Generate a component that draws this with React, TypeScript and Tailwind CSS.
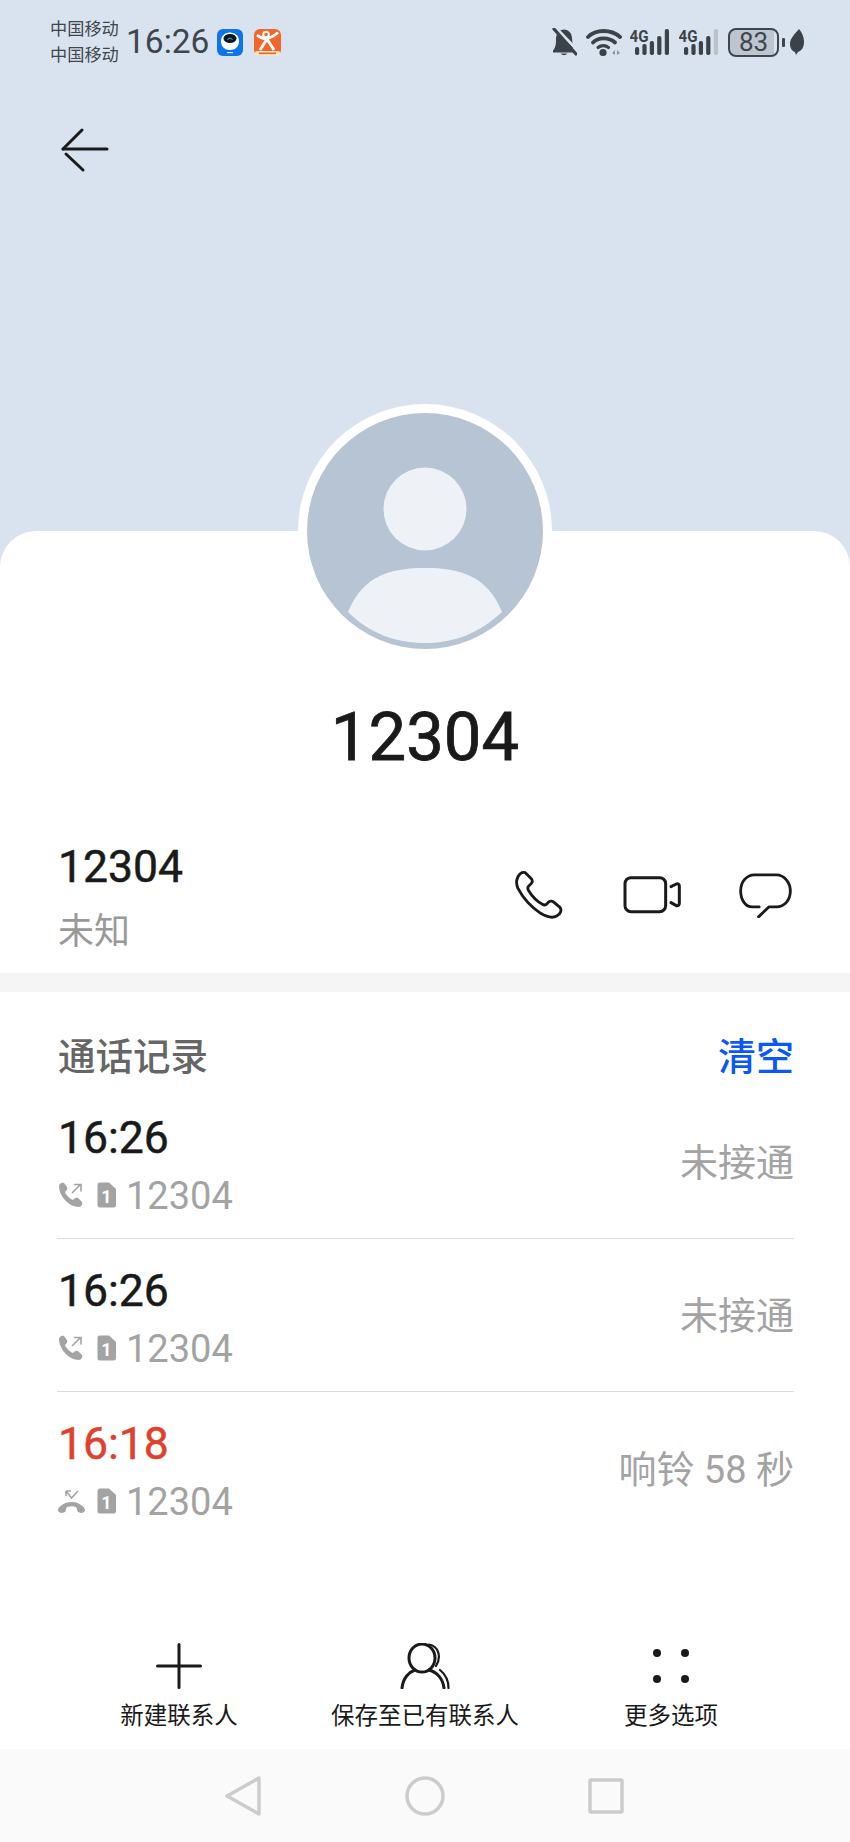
import React from "react";

const calls = [
  { time: "16:26", note: "未接通", missed: false },
  { time: "16:26", note: "未接通", missed: false },
  { time: "16:18", note: "响铃 58 秒", missed: true },
];

// signal bars with the 4G label, the last bar is dimmed on the second sim
const Signal = ({ dim }: { dim?: boolean }) => (
  <svg width="40" height="28" viewBox="0 0 40 28" fill="#3c4249">
    <text x="-0.5" y="13.5" fontSize="16" fontWeight="700" fontFamily="Roboto, sans-serif" textLength="19" lengthAdjust="spacingAndGlyphs">
      4G
    </text>
    <rect x="5" y="19" width="4.2" height="8" rx="1.800" />
    <rect x="12.400" y="16" width="4.200" height="11" rx="1.800" />
    <rect x="19.800" y="13" width="4.200" height="14" rx="1.800" />
    <rect x="27.200" y="8" width="4.200" height="19" rx="1.800" />
    <rect x="34.800" y="1" width="4.200" height="26" rx="1.800" fill={dim ? "#b9c1cb" : "#3c4249"} />
  </svg>
);

const StatusBar = () => (
  <div className="flex h-[84px] items-center pl-[50px] pr-[46px] text-[#3f454d]">
    <div className="w-[76px] text-[17.2px] leading-[26px]">
      <div>中国移动</div>
      <div>中国移动</div>
    </div>
    <span className="w-[91px] text-[33.5px] leading-none">16:26</span>
    {/* app notification icons */}
    <svg width="26" height="27" viewBox="0 0 26 27">
      <rect width="26" height="27" rx="6" fill="#0f74e8" />
      <path d="M4 12 C4 7 8 3.500 13 3.500 C18 3.500 22 7 22 12 C22 18 18 21 13 21 C8 21 4 18 4 12Z" fill="#fff" />
      <ellipse cx="13" cy="9.500" rx="6.500" ry="4.500" fill="#0d1622" />
      <path d="M10.500 10.500 Q13 7.500 15.500 10.500" stroke="#36c6d8" strokeWidth="1" fill="none" />
      <rect x="10" y="23" width="6" height="1.200" fill="#cfe3fb" />
    </svg>
    <svg className="ml-[11px]" width="27" height="27" viewBox="0 0 27 27">
      <rect width="27" height="27" rx="6" fill="#f0662b" />
      <rect x="1" y="22" width="25" height="5" rx="2" fill="#fbe3c8" />
      <circle cx="12" cy="5.500" r="2.800" fill="none" stroke="#fff" strokeWidth="2" />
      <path d="M3 6 Q12 14 24 3.500 M13 10 L6 21 M13 10 L20 21" stroke="#fff" strokeWidth="2.800" fill="none" />
      <rect x="5" y="23.500" width="17" height="1.600" fill="#e8632a" />
    </svg>

    <div className="ml-auto flex items-center">
      <svg width="25" height="28" viewBox="0 0 25 28" fill="#3c4249">
        <path d="M1 22.500 C4 19 4 15 4 11 C4 6 7 1.500 12 1.500 C17 1.500 20 6 20 10 L21 21 L24 24.500 L1 24.500Z" />
        <path d="M8.500 25.500 Q12 29 15.500 25.500Z" />
        <path d="M5 1 L27 24" stroke="#d9e3ef" strokeWidth="3" />
        <path d="M2 1 L24 26" stroke="#3c4249" strokeWidth="3.200" strokeLinecap="round" />
      </svg>
      <svg className="ml-[9px]" width="36" height="28" viewBox="0 0 36 28" fill="none" stroke="#3c4249" strokeLinecap="round">
        <path d="M2 9 C10 1 25 1 34 9" strokeWidth="3.800" />
        <path d="M7 14.500 C12 9 23 9 29 14.500" strokeWidth="3.800" />
        <path d="M12 19.500 C15 17 19.500 17 22.500 19.500" strokeWidth="3.200" />
        <circle cx="17" cy="24.500" r="3.600" fill="#3c4249" stroke="none" />
        <path d="M26 25 L29 22 L29 27Z M31 22 L34 25 L31 27Z" fill="#8d949d" stroke="none" />
      </svg>
      <div className="ml-[8px]">
        <Signal />
      </div>
      <div className="ml-[9px]">
        <Signal dim />
      </div>
      <div className="ml-[9px] flex h-[29px] w-[51px] items-center justify-center rounded-[8px] border-[2.5px] border-[#3f4650] bg-[linear-gradient(90deg,#bcc5d0_93%,transparent_93%)] text-[26px] leading-none">
        83
      </div>
      <div className="ml-[3px] h-[9px] w-[3px] rounded-[1px] bg-[#3f4650]" />
      <svg className="ml-[5px]" width="14" height="26" viewBox="0 0 14 26" fill="#3c4249">
        <path d="M9 0 C13 5 14 9 14 13 C14 19 11 22 8 23 L6 26 L5 23 C2 22 0 19 0 15 C0 9 5 5 9 0Z" />
      </svg>
    </div>
  </div>
);

const Avatar = () => (
  <div className="mx-auto -mt-[127px] h-[254px] w-[254px] shrink-0 rounded-full bg-white p-[9px]">
    <svg width="236" height="236" viewBox="0 0 236 236">
      <circle cx="118" cy="118" r="118" fill="#b6c4d3" />
      <circle cx="118" cy="96" r="41.500" fill="#eef2f7" />
      <path d="M41 199 C56 162 84 155 118 155 C152 155 180 162 195 199 C172 220 148 230 118 230 C88 230 62 220 41 199Z" fill="#eef2f7" />
    </svg>
  </div>
);

// drawn in 3x coordinates taken off the reference
const ContactActions = () => (
  <div className="mt-[32px] flex items-center">
    <svg width="50" height="50" viewBox="100 90 150 150" fill="none" stroke="#1a1a1a" strokeWidth="8.500" strokeLinejoin="round">
      <path d="M108 122 C112 100 125 95 134 98 L152 116 C158 124 154 130 146 136 C140 140 140 146 145 154 C155 170 170 185 185 193 C192 197 196 195 200 190 C206 182 214 182 220 187 L238 202 C244 210 240 222 228 228 C218 234 200 232 180 220 C150 200 125 170 112 145 C108 136 107 130 108 122Z" />
    </svg>
    <svg className="ml-[58px]" width="60" height="40" viewBox="425 105 180 120" fill="none" stroke="#1a1a1a" strokeWidth="9" strokeLinecap="round" strokeLinejoin="round">
      <rect x="434" y="113" width="122" height="102" rx="18" />
      <path d="M572 140 L588 132 Q597 130 597 138 L597 190 Q597 198 588 197 L572 188" />
    </svg>
    <svg className="ml-[56px]" width="55" height="46" viewBox="772 96 166 138" fill="none" stroke="#1a1a1a" strokeWidth="8.500" strokeLinecap="round" strokeLinejoin="round">
      <path d="M836 201 L815 201 C795 201 780 180 780 153 C780 125 798 104 822 104 L888 104 C912 104 930 128 930 153 C930 180 912 201 888 201 L865 201 L834 231" />
    </svg>
  </div>
);

const OutgoingIcon = () => (
  <svg width="26" height="26" viewBox="0 0 26 26" fill="#a3a3a3">
    <path d="M1 4 C1 2 4 0 6 1 L9 5 C10 7 8 9 7 10 C8 13 12 17 15 18 C16 17 18 15 20 16 L24 20 C25 22 23 25 21 25 C11 25 1 14 1 4Z" />
    <path d="M14 11 L22 3 M16 2.500 L23 2.500 L23 9.500" fill="none" stroke="#a3a3a3" strokeWidth="1.600" />
  </svg>
);

const MissedIcon = () => (
  <svg width="27" height="26" viewBox="0 0 27 26" fill="#a3a3a3">
    <path d="M0 22 C0 19 6 14 13.500 14 C21 14 27 19 27 22 C27 24 25 25 23 25 L20 24 C19 23 19 20 18 19 C15 18 12 18 9 19 C8 20 8 23 7 24 L4 25 C2 25 0 24 0 22Z" />
    <path d="M8 3 L13.500 10 L20 3 M8 3 L8 8 M8 3 L13 3" fill="none" stroke="#a3a3a3" strokeWidth="1.600" />
  </svg>
);

const SimIcon = () => (
  <svg width="19" height="26" viewBox="0 0 19 26">
    <path d="M3 0.500 L12 0.500 L19 7 L19 23 Q19 25.500 16.500 25.500 L3 25.500 Q0.500 25.500 0.500 23 L0.500 3 Q0.500 0.500 3 0.500Z" fill="#a3a3a3" />
    <text x="9.500" y="20.500" fontSize="18" fontWeight="700" textAnchor="middle" fill="#fff" fontFamily="Roboto, sans-serif">
      1
    </text>
  </svg>
);

const BottomAction = ({ label, children }: { label: string; children: React.ReactNode }) => (
  <div className="flex flex-col items-center">
    <div className="flex h-[48px] items-center justify-center">{children}</div>
    <span className="mt-[10px] text-[23.5px] leading-[32px] text-[#1a1a1a]">{label}</span>
  </div>
);

const App = () => {
  return (
    <div className="flex h-[1842px] w-[850px] flex-col overflow-hidden bg-[#d9e3ef] font-['Roboto','Noto_Sans_CJK_SC',sans-serif]">
      <div className="h-[531px] shrink-0">
        <StatusBar />
        <svg className="ml-[60px] mt-[43px]" width="50" height="46" viewBox="0 0 50 46" fill="none" stroke="#1a1a1a" strokeWidth="3" strokeLinecap="round">
          <path d="M3 22 L22 3" />
          <path d="M3 22 L47 22" />
          <path d="M6 27 L23 43" />
        </svg>
      </div>

      <div className="flex flex-1 flex-col rounded-t-[36px] bg-white">
        <Avatar />
        <div className="mt-[41px] text-center text-[67px] leading-[76px] text-[#1a1a1a] [-webkit-text-stroke:0.8px]">12304</div>

        <div className="mt-[63px] flex h-[135px] items-start justify-between pl-[58px] pr-[57px]">
          <div>
            <div className="pt-[1px] text-[44.5px] leading-[56px] text-[#1a1a1a] [-webkit-text-stroke:0.5px]">12304</div>
            <div className="mt-[13px] text-[36px] leading-[48px] text-[#999999]">未知</div>
          </div>
          <ContactActions />
        </div>

        <div className="h-[19px] bg-[#f5f5f5]" />

        <div className="pl-[57px] pr-[56px]">
          <div className="flex h-[94px] items-center justify-between pl-[1px] pt-[36px]">
            <span className="text-[37.5px] font-medium leading-[50px] text-[#666666]">通话记录</span>
            <span className="text-[38px] font-medium leading-[50px] text-[#0a59f7]">清空</span>
          </div>
          {calls.map((call, i) => (
            <div
              key={i}
              className={`flex h-[153px] justify-between pl-[1px] ${i < calls.length - 1 ? "border-b border-[#dcdcdc]" : ""}`}
            >
              <div className="pt-[26px]">
                <div className={`text-[44.5px] leading-[52px] [-webkit-text-stroke:0.5px] ${call.missed ? "text-[#e0412c]" : "text-[#1a1a1a]"}`}>
                  {call.time}
                </div>
                <div className="mt-[6px] flex h-[50px] items-center">
                  {call.missed ? <MissedIcon /> : <OutgoingIcon />}
                  <div className={call.missed ? "ml-[12px] flex" : "ml-[13px] flex"}>
                    <SimIcon />
                  </div>
                  <span className="ml-[10px] pt-[2px] text-[38px] leading-[50px] text-[#a3a3a3]">12304</span>
                </div>
              </div>
              <span className="mt-[2px] self-center text-[38px] leading-[50px] text-[#a3a3a3]">{call.note}</span>
            </div>
          ))}
        </div>

        <div className="mt-auto grid grid-cols-3 px-[56px] pb-[17px]">
          <BottomAction label="新建联系人">
            <svg width="46" height="46" viewBox="0 0 46 46" stroke="#1a1a1a" strokeWidth="3" strokeLinecap="round">
              <path d="M23 1.500 L23 44.500 M1.500 23 L44.500 23" />
            </svg>
          </BottomAction>
          <BottomAction label="保存至已有联系人">
            <svg width="50" height="46" viewBox="0 0 50 46" fill="none" stroke="#1a1a1a" strokeLinecap="round">
              <ellipse cx="22" cy="15" rx="13" ry="14" strokeWidth="3" />
              <path d="M2 45 C3 35 9 29 15 27 M29 27 C37 29 43 36 44 45" strokeWidth="3" />
              <path d="M29 1.500 C38 3 42 13 36 23 M40 27 C45 31 48.500 38 48.500 45" strokeWidth="2.200" />
            </svg>
          </BottomAction>
          <BottomAction label="更多选项">
            <svg width="38" height="36" viewBox="0 0 38 36" fill="#1a1a1a">
              <circle cx="5" cy="5" r="4" />
              <circle cx="33" cy="5" r="4" />
              <circle cx="5" cy="31" r="4" />
              <circle cx="33" cy="31" r="4" />
            </svg>
          </BottomAction>
        </div>

        <div className="flex h-[93px] items-center justify-center gap-[142px] bg-[#fafafa]">
          <svg width="40" height="40" viewBox="0 0 40 40" fill="none" stroke="#cccccc" strokeWidth="3.500" strokeLinejoin="round">
            <path d="M36 2 L36 38 L4 20Z" />
          </svg>
          <svg width="40" height="40" viewBox="0 0 40 40" fill="none" stroke="#cccccc" strokeWidth="3.500">
            <circle cx="20" cy="20" r="18" />
          </svg>
          <svg width="40" height="40" viewBox="0 0 40 40" fill="none" stroke="#cccccc" strokeWidth="3.500" strokeLinejoin="round">
            <rect x="3" y="4" width="32" height="32" rx="1" />
          </svg>
        </div>
      </div>
    </div>
  );
};

export default App;
